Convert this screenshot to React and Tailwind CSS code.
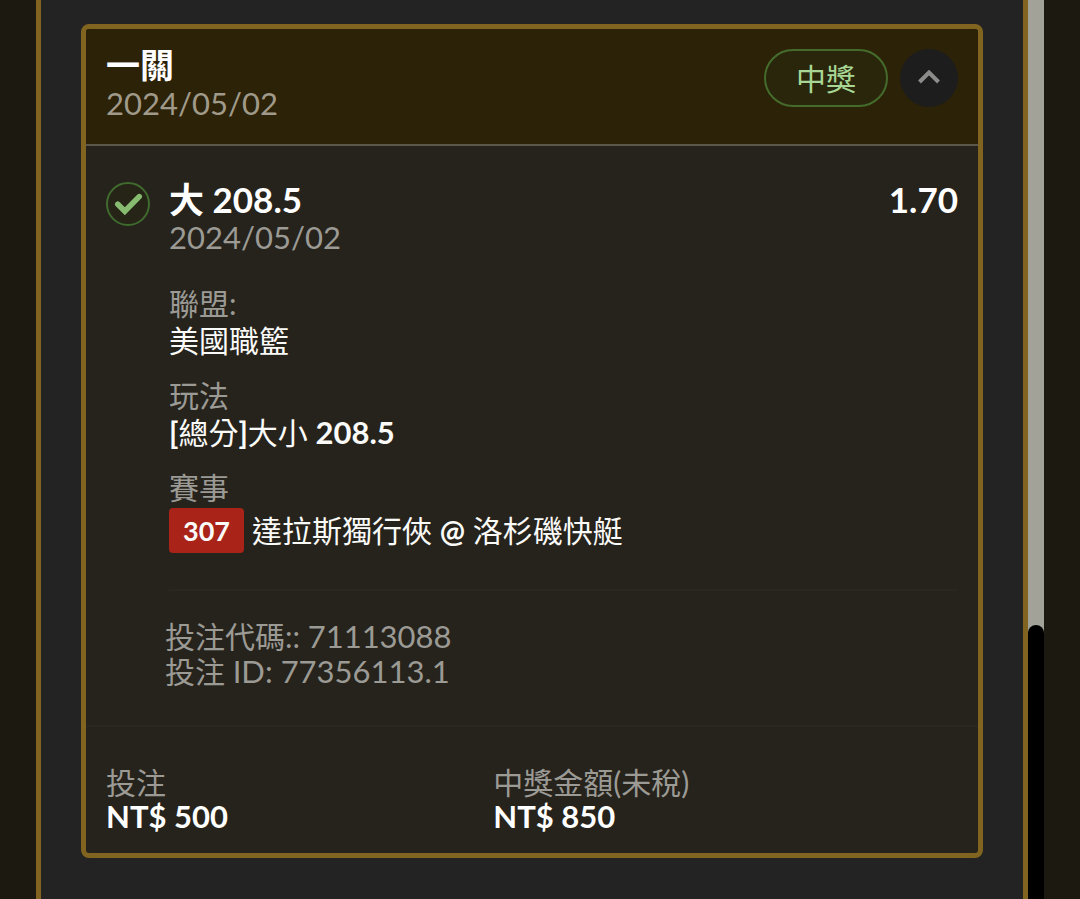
import { useState } from 'react'

const bet = {
    title: '一關',
    date: '2024/05/02',
    status: '中獎',
    pick: '大 208.5',
    odds: '1.70',
    league: '美國職籃',
    eventNo: '307',
    away: '達拉斯獨行俠',
    home: '洛杉磯快艇',
    code: '71113088',
    id: '77356113.1',
    stake: 'NT$ 500',
    payout: 'NT$ 850',
}

function WonIcon() {
    return (
        <svg viewBox="0 0 44 44" className="size-11 shrink-0" fill="none" aria-hidden="true">
            <circle cx="22" cy="22" r="21" fill="#25260f" fillOpacity="0.4" stroke="#3f6b2e" strokeWidth="2" />
            <path
                d="M11.8 22.3L18.8 29.3L33.2 14.6"
                stroke="#86bb70"
                strokeWidth="5.6"
                strokeLinecap="round"
                strokeLinejoin="miter"
            />
        </svg>
    )
}

function Chevron({ open }) {
    return (
        <svg
            viewBox="0 0 24 16"
            className={`h-4 w-6 ${open ? '' : 'rotate-180'}`}
            fill="none"
            stroke="#8c8c8a"
            strokeWidth="4"
            aria-hidden="true"
        >
            <path d="M2.5 12L12 2.5L21.5 12" />
        </svg>
    )
}

function Field({ label, children }) {
    return (
        <div className="leading-[37px]">
            <dt className="text-[#9b9a95]">{label}</dt>
            <dd className="text-[#fafaf8]">{children}</dd>
        </div>
    )
}

function BetCard() {
    const [open, setOpen] = useState(true)

    return (
        <article className="overflow-hidden rounded-lg border-[5px] border-[#80641f] bg-[#26231c]">
            <header className="flex items-start justify-between border-b-2 border-[#5a5649] bg-[#2c2208] px-5 pt-[17px] pb-[22px]">
                <div className="leading-[38px]">
                    <h2 className="text-[34px] font-bold text-white">{bet.title}</h2>
                    <p className="text-[31px] text-[#a09a8a]">{bet.date}</p>
                </div>
                <div className="flex items-center gap-3 pt-[3px]">
                    <span className="rounded-full border-2 border-[#446b2b] bg-[#29260b] px-[30px] py-2 leading-[38px] text-[#a8d795]">
                        {bet.status}
                    </span>
                    <button
                        type="button"
                        aria-label="展開"
                        aria-expanded={open}
                        onClick={() => setOpen(!open)}
                        className="flex size-[58px] items-center justify-center rounded-full bg-[#1d1d1d]"
                    >
                        <Chevron open={open} />
                    </button>
                </div>
            </header>

            {open && (
                <section className="flex items-start gap-[19px] border-b-2 border-[#2a2720] px-5 pt-[34px] pb-9">
                    <div className="pt-0.5">
                        <WonIcon />
                    </div>
                    <div className="flex-1">
                        <div className="flex items-start justify-between text-[35px] leading-[38px] font-bold text-white">
                            <h3>{bet.pick}</h3>
                            <span>{bet.odds}</span>
                        </div>
                        <p className="text-[31px] leading-[38px] text-[#9b9a95]">{bet.date}</p>

                        <dl className="flex flex-col gap-[18px] pt-[29px] pb-9">
                            <Field label="聯盟:">{bet.league}</Field>
                            <Field label="玩法">
                                <b>[</b>總分<b>]</b>大小 <b className="text-[31px]">208.5</b>
                            </Field>
                            <Field label="賽事">
                                <span className="flex items-center gap-2 pt-0.5">
                                    <span className="rounded bg-[#a92318] px-3.5 py-1 text-[27px] font-bold">
                                        {bet.eventNo}
                                    </span>
                                    <span>{bet.away} <b>@</b> {bet.home}</span>
                                </span>
                            </Field>
                        </dl>

                        <hr className="border-t-2 border-[#2a2720]" />
                        <div className="-ml-1 pt-7 leading-[35px] text-[#9b9a95]">
                            <p>投注代碼:: <span className="text-[31px]">{bet.code}</span></p>
                            <p>投注 <span className="text-[31px]">ID: {bet.id}</span></p>
                        </div>
                    </div>
                </section>
            )}

            <dl className="grid grid-cols-[5fr_6fr] px-5 pt-[38px] pb-5 leading-[34px]">
                <div>
                    <dt className="text-[#9b9a95]">投注</dt>
                    <dd className="text-[31px] font-bold text-white">{bet.stake}</dd>
                </div>
                <div>
                    <dt className="text-[#9b9a95]">中獎金額(未稅)</dt>
                    <dd className="text-[31px] font-bold text-white">{bet.payout}</dd>
                </div>
            </dl>
        </article>
    )
}

function App() {
    return (
        <div className="flex min-h-screen bg-[#1c1911] px-9 font-[Lato,'Noto_Sans_CJK_TC',sans-serif] text-[30px]">
            <main className="flex-1 border-x-[5px] border-[#80641f] bg-[#232323] px-10 pt-6 pb-10">
                <BetCard />
            </main>
            <div className="flex w-4 flex-col bg-[#a2a298]">
                <div className="basis-[69.5%]" />
                <div className="flex-1 rounded-t-full bg-black" />
            </div>
        </div>
    )
}

export default App
